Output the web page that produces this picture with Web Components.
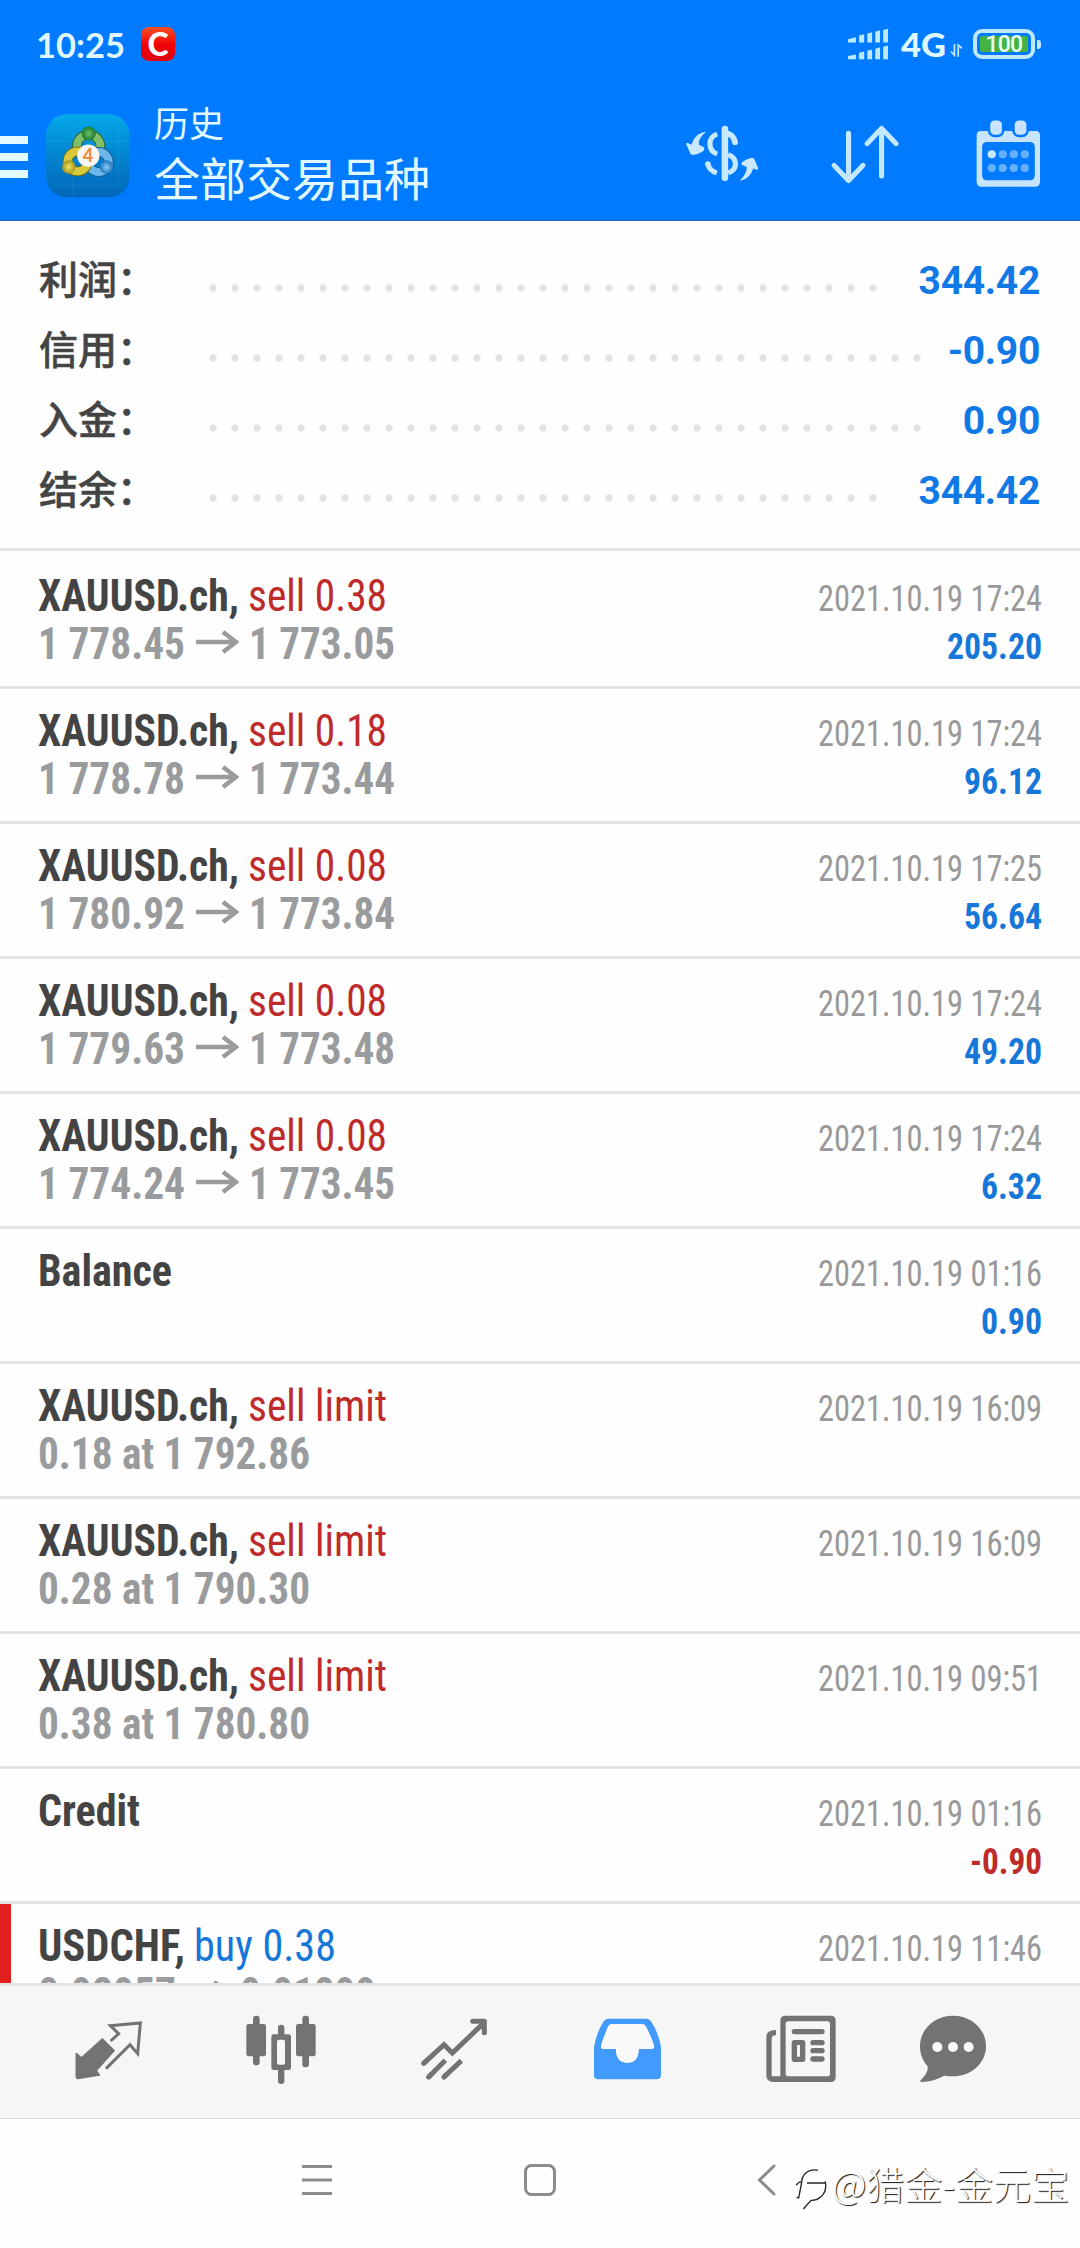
<!DOCTYPE html>
<html lang="zh-CN">
<head>
<meta charset="utf-8">
<title>历史</title>
<style>
html,body{margin:0;padding:0;background:#fdfdfd}
body{width:1080px;height:2248px;overflow:hidden;font-family:"Roboto Condensed",Roboto,"Noto Sans CJK SC",sans-serif;font-stretch:75%}
</style>
</head>
<body>
<history-app></history-app>
<script>
const define = (name, html, setup) => customElements.define(name, class extends HTMLElement {
  connectedCallback() {
    if (this.shadowRoot) return;
    const t = document.createElement('template');
    t.innerHTML = typeof html === 'function' ? html(this) : html;
    this.attachShadow({ mode: 'open' }).appendChild(t.content.cloneNode(true));
    if (setup) setup(this);
  }
});

/* Single line of text condensed or widened to the width given in "w". */
define('fit-text', `<style>
:host{display:inline-block;white-space:pre;height:48px;line-height:48px}
span{display:inline-block;transform-origin:0 0}
</style><span><slot></slot></span>`, el => {
  const w = +el.getAttribute('w');
  const s = el.shadowRoot.querySelector('span');
  el.style.width = w + 'px';
  const n = s.getBoundingClientRect().width;
  if (n) s.style.transform = `scaleX(${w / n})`;
});

define('status-bar', `<style>
:host{display:flex;height:88px;align-items:center;color:#dff7ff;font-family:Lato,"Open Sans",sans-serif;font-stretch:100%}
.time{font-size:35px;font-weight:700;margin-left:36px}
.c{margin-left:16px;width:34px;height:34px;border-radius:8px;background:linear-gradient(#ff5023,#ef0008 55%,#e00010);color:#fff;font:900 32px/33px Lato,sans-serif;text-align:center}
.sig{margin-left:auto}
.g{font-size:33px;font-weight:900;margin-left:13px}
.ar{margin-left:4px;margin-top:12px}
.bat{display:flex;align-items:center;margin-left:10px;margin-right:39px}
.cell{box-sizing:border-box;width:62px;height:30px;border:4px solid #bfe7ff;border-radius:9px;padding:3px;display:flex}
.cell b{flex:1;background:#45b244;border-radius:2px;font:500 23px/17px Roboto,sans-serif;text-align:center;color:#e9fff5;letter-spacing:-.8px}
.nub{width:4px;height:9px;margin-left:2px;border-radius:0 3px 3px 0;background:#bfe7ff}
</style>
<fit-text class="time" w="89">10:25</fit-text>
<div class="c">C</div>
<svg class="sig" width="40" height="32" viewBox="894 85 116 97" preserveAspectRatio="none" fill="#bfe7ff"><path d="M894 119L917 113V129H894ZM926 108L941 104V129H926ZM950 102L964 98V129H950ZM973 96L987 92V129H973ZM996 91L1010 87V129H996ZM894 170L917 165V180H894ZM926 160L941 156V180H926ZM950 154L964 150V180H950ZM973 148L987 143V180H973ZM996 142L1010 138V180H996Z"/></svg>
<fit-text class="g" w="45">4G</fit-text>
<svg class="ar" width="13" height="14" viewBox="1190 132 38 41" preserveAspectRatio="none" stroke="#bfe7ff" stroke-width="5" fill="none"><path d="M1203 135V168L1193 157M1214 172V138L1225 148"/></svg>
<div class="bat"><div class="cell"><b>100</b></div><div class="nub"></div></div>`);

define('app-logo', `<style>:host{display:block;width:84px;height:84px}</style>
<svg width="84" height="84" viewBox="20 26 250 250">
<defs><linearGradient id="b" x1="0" y1="0" x2="0" y2="1"><stop offset="0" stop-color="#05a9ea"/><stop offset=".5" stop-color="#0284cf"/><stop offset="1" stop-color="#0067b8"/></linearGradient>
<radialGradient id="g"><stop offset="0" stop-color="#6cc06a"/><stop offset="1" stop-color="#1a7a2c"/></radialGradient>
<radialGradient id="y"><stop offset="0" stop-color="#efe36a"/><stop offset="1" stop-color="#a59618"/></radialGradient>
<radialGradient id="u"><stop offset="0" stop-color="#8accf5"/><stop offset="1" stop-color="#1d75bd"/></radialGradient></defs>
<rect x="20" y="26" width="248" height="248" rx="62" fill="url(#b)"/>
<path d="M101 55V272M235 65V245M25 108H262M40 238H250" stroke="#4bb9ea" stroke-opacity=".3" stroke-width="2"/>
<g fill="none"><circle cx="147" cy="122" r="35" stroke="#24692f" stroke-width="29"/><circle cx="147" cy="122" r="35" stroke="#7fbf6c" stroke-width="23"/>
<circle cx="177" cy="169" r="30" stroke="#175a90" stroke-width="29"/><circle cx="177" cy="169" r="30" stroke="#6bb7eb" stroke-width="23"/>
<circle cx="114" cy="167" r="30" stroke="#77701a" stroke-width="29"/><circle cx="114" cy="167" r="30" stroke="#d8c93b" stroke-width="23"/></g>
<circle cx="147" cy="84" r="21" fill="url(#g)"/><circle cx="88" cy="184" r="20" fill="url(#y)"/><circle cx="200" cy="184" r="20" fill="url(#u)"/>
<circle cx="146" cy="150" r="33" fill="#faf6f2"/>
<text x="145" y="169" text-anchor="middle" font-family="Lato" font-weight="700" font-size="54" fill="#ee8a3c">4</text>
</svg>`);

define('title-bar', `<style>
:host{display:flex;height:132px}
.menu{width:28px;padding-top:48px;display:flex;flex-direction:column;gap:9px}
.menu i{display:block;height:8px;background:#e2faff}
app-logo{margin:26px 0 0 18px}
.t{margin:14px 0 0 24px;color:#e2faff;font-family:"Noto Sans CJK SC",sans-serif;font-stretch:100%}
.a{font-size:35px;line-height:40px}
.b{font-size:46px;line-height:56px;margin-top:6px}
.act{margin-left:auto;display:flex}
svg{display:block}
</style>
<div class="menu"><i></i><i></i><i></i></div>
<app-logo></app-logo>
<div class="t"><div class="a">历史</div><div class="b">全部交易品种</div></div>
<div class="act">
<svg width="130" height="132" viewBox="348 264 377.5 396" preserveAspectRatio="none" fill="#c9e9ff">
<path d="M482 395C466 408 460 421 461 434L476 442Q478 448 474 453Q460 464 442 465Q438 465 437 462L424 433Q424 427 430 430L440 434C446 410 462 397 482 395Z"/>
<path d="M579 542C594 529 600 513 600 501L585 494Q582 490 587 486Q600 475 615 473Q620 473 622 478L633 505Q633 511 628 509L619 505C612 527 598 541 579 542Z"/>
<rect x="527" y="377" width="19" height="166" rx="9"/>
<path d="M514 402Q493 410 493 431Q493 454 514 462" fill="none" stroke="#c9e9ff" stroke-width="15"/>
<path d="M546 401Q562 407 566 427" fill="none" stroke="#c9e9ff" stroke-width="17" stroke-linecap="round"/>
<path d="M546 464Q567 472 567 492Q567 511 546 519" fill="none" stroke="#c9e9ff" stroke-width="15"/>
<path d="M487 493Q492 512 513 519" fill="none" stroke="#c9e9ff" stroke-width="15"/><circle cx="487" cy="492" r="8"/>
</svg>
<svg width="140" height="132" viewBox="726 264 406.6 396" preserveAspectRatio="none" fill="none" stroke="#c3e8ff" stroke-width="15" stroke-linecap="round" stroke-linejoin="round">
<path d="M896 400V541M854 496L896 542L938 496M992 528V386M950 431L992 385L1034 431"/></svg>
<svg width="150" height="132" viewBox="1132.6 264 435.6 396" preserveAspectRatio="none">
<path fill="#c9e4ff" fill-rule="evenodd" d="M1280 393H1440Q1452 393 1452 407V544Q1452 560 1440 560H1281Q1268 560 1268 544V407Q1268 393 1280 393ZM1298 426Q1284 426 1284 442V525Q1284 541 1298 541H1422Q1437 541 1437 525V442Q1437 426 1422 426Z"/>
<g fill="#c9e4ff" stroke="#007aff" stroke-width="7"><rect x="1304" y="358" width="41" height="50" rx="16"/><rect x="1375" y="358" width="41" height="50" rx="16"/></g>
<g fill="#66b1ff"><circle cx="1312" cy="463" r="12" fill="#c9e8ff"/><circle cx="1344" cy="463" r="12"/><circle cx="1376" cy="463" r="12"/><circle cx="1408" cy="463" r="12"/><circle cx="1312" cy="504" r="12"/><circle cx="1344" cy="504" r="12"/><circle cx="1376" cy="504" r="12"/><circle cx="1408" cy="504" r="12"/></g>
</svg></div>`);

define('summary-row', el => `<style>
:host{display:flex;height:70px;line-height:70px;align-items:baseline;padding:0 40px 0 39px;font-size:39px;font-stretch:100%}
.l{width:163px;color:#444;font-family:Roboto,"Noto Sans CJK SC",sans-serif;font-weight:500;white-space:nowrap;-webkit-text-stroke:.5px #444}
.d{align-self:center;margin-top:14px;height:8px;width:${22 * el.getAttribute('dots')}px;background:radial-gradient(circle 4px at 11px 4px,#e2e2e2 82%,transparent 100%) 0 0/22px 8px repeat-x}
.v{margin-left:auto;font-family:Roboto,sans-serif;font-weight:700;color:#1179e6;letter-spacing:-.3px}
</style><div class="l"><slot></slot></div><div class="d"></div><div class="v">${el.getAttribute('value')}</div>`);

define('trade-row', el => {
  const a = n => el.getAttribute(n);
  const right = { 6: 95, 5: 78, 4: 61 };
  const val = a('value') || '';
  const w = val[0] === '-' ? 72 : right[val.length];
  const last = a('last') !== null;
  const arrow = `<svg width="43" height="24" viewBox="0 0 43 24"><path d="M0 12H40M27 2L40 12L27 22" fill="none" stroke="#999b9d" stroke-width="4.5"/></svg>`;
  return `<style>
:host{display:flex;box-sizing:border-box;height:135px;border-top:3px solid #e3e3e3;padding:0 38px 0 38px;justify-content:space-between;position:relative;overflow:hidden;font-size:44px}
:host([first]){height:138px;padding-top:3px}
:host([last]){height:82px}
.edge{position:absolute;left:0;top:0;width:11px;height:79px;background:#e11f1f}
.l{padding-top:18px}
.line{display:flex;height:48px}
.n{font-weight:700;color:#444}
.k{color:${a('side') === 'buy' ? '#1677d8' : '#bf2a2a'};margin-left:9px}
.p{font-weight:700;color:#999b9d}
.line svg{margin:10px 10px 0 11px}
.r{padding-top:21px;font-size:36.5px;display:flex;flex-direction:column;align-items:flex-end}
.dt{color:#999}
.v{font-weight:700;color:${w === 72 ? '#bf2a2a' : '#1677d8'}}
</style>${last ? '<div class="edge"></div>' : ''}
<div class="l"><div class="line"><fit-text class="n" w="${a('nw')}">${a('name')}</fit-text>${a('kind') ? `<fit-text class="k" w="${a('kw')}">${a('kind')}</fit-text>` : ''}</div>
<div class="line">${a('from') ? `<fit-text class="p" w="${last ? 138 : 147}">${a('from')}</fit-text>${arrow}<fit-text class="p" w="${last ? 136 : 146}">${a('to')}</fit-text>` : ''}${a('at') ? `<fit-text class="p" w="272">${a('at')}</fit-text>` : ''}</div></div>
<div class="r"><fit-text class="dt" w="224">${a('date')}</fit-text>${val ? `<fit-text class="v" w="${w}">${val}</fit-text>` : ''}</div>`;
});

define('tab-bar', `<style>
:host{display:flex;height:132px;background:#f6f6f6;border-top:3px solid #e3e3e3;border-bottom:1px solid #dcdcdc}
svg{display:block;flex:none}
</style>
<svg width="194" height="132" viewBox="0 318 582 396"><path fill="#737373" stroke="#737373" stroke-width="5" stroke-linejoin="round" d="M307 477L342 512L288 572L298 585L234 595Q229 595 229 589V521L244 534Z"/><path d="M332 483L356 461L331 437L421 429L413 521L390 494L318 566" fill="none" stroke="#737373" stroke-width="9"/></svg>
<svg width="173" height="132" viewBox="582 318 519 396" fill="#737373"><rect x="739" y="432" width="59" height="97" rx="7"/><rect x="759" y="407" width="20" height="149" rx="9"/><rect x="888" y="432" width="59" height="97" rx="7"/><rect x="907" y="407" width="20" height="155" rx="9"/><path fill-rule="evenodd" d="M821 463H866Q873 463 873 470V563Q873 570 866 570H821Q814 570 814 563V470Q814 463 821 463ZM831 485V549Q831 554 837 554H850Q855 554 855 549V485Q855 479 850 479H837Q831 479 831 485Z"/><path d="M834 465V443Q834 434 843 434Q853 434 853 443V465Z"/><rect x="834" y="562" width="19" height="50" rx="9"/></svg>
<svg width="173" height="132" viewBox="-39 18 519 396" fill="none" stroke="#737373" stroke-width="15"><path d="M131 250L192 194L217 219L306 134" stroke-linejoin="miter"/><path d="M278 124H313V158M131 250L140 242M146 291L152 285M192 291L198 285" stroke-linecap="round" stroke-linejoin="round"/><path d="M296 124L313 142V124Z" fill="#737373" stroke="none"/><path d="M146 291L196 241M192 291L244 242"/></svg>
<svg width="173" height="132" viewBox="480 18 519 396"><path fill="#429bfc" fill-rule="evenodd" d="M684 116H800Q808 116 813 124Q837 161 843 201V285Q843 298 830 298H655Q642 298 642 285V201Q648 161 671 124Q676 116 684 116ZM697 132Q688 132 684 141Q671 172 663 197Q662 207 671 207H708Q708 248 742 248Q776 248 776 207H815Q824 206 822 197Q813 169 798 140Q794 132 786 132Z"/><path fill="#fafafa" d="M697 132Q688 132 684 141Q671 172 663 197Q662 207 671 207H708Q708 248 742 248Q776 248 776 207H815Q824 206 822 197Q813 169 798 140Q794 132 786 132Z"/></svg>
<svg width="167" height="132" viewBox="-21 18 501 396" fill="#737373"><path fill-rule="evenodd" d="M197 107H332Q347 107 347 122V291Q347 306 332 306H160Q139 306 139 285V171Q139 150 168 150V166Q155 165 155 177V289H181V122Q181 107 197 107ZM205 124Q197 124 197 132V281Q197 289 205 289H322Q330 289 330 281V132Q330 124 322 124Z"/><rect x="215" y="147" width="99" height="16" rx="8"/><path fill-rule="evenodd" d="M223 180H248Q256 180 256 188V238Q256 246 248 246H223Q215 246 215 238V188Q215 180 223 180ZM231 195V230H240V195Z"/><rect x="271" y="180" width="43" height="16" rx="8"/><rect x="271" y="204" width="43" height="16" rx="8"/><rect x="271" y="229" width="43" height="16" rx="8"/></svg>
<svg width="200" height="132" viewBox="480 18 600 396"><path fill="#737373" d="M699 107C754 107 798 147 798 198C798 249 754 289 699 289Q684 289 672 287Q642 305 606 306Q597 305 603 299Q625 280 623 259C608 242 600 222 600 198C600 147 644 107 699 107Z"/><g fill="#fafafa"><circle cx="652" cy="201" r="15"/><circle cx="699" cy="201" r="15"/><circle cx="746" cy="201" r="15"/></g></svg>`);

define('nav-bar', `<style>
:host{display:flex;position:relative;height:129px;background:#fefefe}
svg{display:block}
.mark{position:absolute;right:11px;top:36px;display:flex;align-items:center;height:56px;color:#fff;font:300 38px/56px "Noto Sans CJK SC",sans-serif;text-shadow:1px 1px 1px #111;white-space:nowrap}
.mark svg{margin:11px 3px 0 0}
</style>
<svg width="1080" height="129" viewBox="0 0 1080 129" fill="none" stroke="#8c8c8c" stroke-width="3"><path d="M302 47.5H332M302 61H332M302 74.5H332"/><rect x="525.5" y="46.5" width="29" height="29" rx="6"/><path d="M774 47L759.5 61L774 75" stroke-linecap="round"/></svg>
<div class="mark"><svg width="34" height="42" viewBox="228 570 102 126" fill="none" stroke="#222" stroke-width="4"><path d="M232 622Q236 613 248 611Q250 585 275 577Q286 574 297 577M248 613L239 660L233 658M264 615H321M322 590M319 610Q325 640 305 657Q292 668 276 667L253 693"/></svg>@猎金-金元宝</div>`);

define('history-app', () => {
  const x = 'name="XAUUSD.ch," nw="201"';
  const deal = (vol, from, to, time, value, extra = '') =>
    `<trade-row ${extra} ${x} kind="sell ${vol}" kw="139" from="${from}" to="${to}" date="2021.10.19 ${time}" value="${value}"></trade-row>`;
  const limit = (at, time) =>
    `<trade-row ${x} kind="sell limit" kw="139" at="${at}" date="2021.10.19 ${time}"></trade-row>`;
  return `<style>
:host{display:flex;flex-direction:column;width:1080px;height:2248px;background:#fefefe}
header{background:#007aff;border-bottom:1px solid #1465bd}
.sum{padding:25px 0 22px}
</style>
<header><status-bar></status-bar><title-bar></title-bar></header>
<div class="sum">
<summary-row dots="31" value="344.42">利润：</summary-row>
<summary-row dots="33" value="-0.90">信用：</summary-row>
<summary-row dots="33" value="0.90">入金：</summary-row>
<summary-row dots="31" value="344.42">结余：</summary-row>
</div>
<div>
${deal('0.38', '1 778.45', '1 773.05', '17:24', '205.20', 'first')}
${deal('0.18', '1 778.78', '1 773.44', '17:24', '96.12')}
${deal('0.08', '1 780.92', '1 773.84', '17:25', '56.64')}
${deal('0.08', '1 779.63', '1 773.48', '17:24', '49.20')}
${deal('0.08', '1 774.24', '1 773.45', '17:24', '6.32')}
<trade-row name="Balance" nw="134" date="2021.10.19 01:16" value="0.90"></trade-row>
${limit('0.18 at 1 792.86', '16:09')}
${limit('0.28 at 1 790.30', '16:09')}
${limit('0.38 at 1 780.80', '09:51')}
<trade-row name="Credit" nw="102" date="2021.10.19 01:16" value="-0.90"></trade-row>
<trade-row last side="buy" name="USDCHF," nw="147" kind="buy 0.38" kw="142" from="0.92957" to="0.91899" date="2021.10.19 11:46"></trade-row>
</div>
<tab-bar></tab-bar>
<nav-bar></nav-bar>`;
});
</script>
</body>
</html>
